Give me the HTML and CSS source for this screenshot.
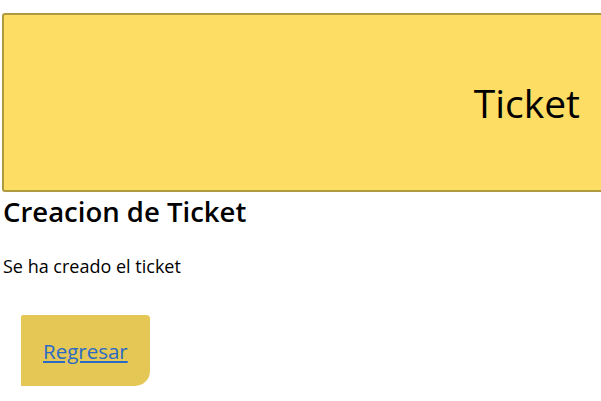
FILE: index.html
```html
<!DOCTYPE html>
<html lang="es">
<head>
<meta charset="utf-8">
<title>Ticket</title>
<link rel="stylesheet" href="styles.css">
</head>
<body>
<header class="banner">
  <h1 class="banner-title">Ticket</h1>
</header>
<main class="content">
  <h2 class="page-title">Creacion de Ticket</h2>
  <p class="message">Se ha creado el ticket</p>
  <div class="back">
    <a class="back-link" href="#">Regresar</a>
  </div>
</main>
</body>
</html>
```

FILE: styles.css
```css
html, body {
  margin: 0;
  padding: 0;
  background: #ffffff;
  font-family: "Open Sans", "Noto Sans", sans-serif;
  color: #000;
  overflow: hidden;
}

.banner {
  margin: 13px 0 0 2px;
  width: 620px;
  height: 179px;
  box-sizing: border-box;
  background: #fddd63;
  border: 2px solid #b09a3f;
  border-radius: 3px;
  display: flex;
  align-items: center;
  justify-content: flex-end;
  padding-right: 40px;
}

.banner-title {
  margin: 0;
  font-size: 39px;
  font-weight: 400;
  line-height: 1;
}

.content {
  padding: 0 0 0 3px;
}

.page-title {
  margin: 4px 0 0 0;
  font-size: 27.5px;
  font-weight: 600;
  line-height: 32px;
}

.message {
  margin: 26px 0 0 0;
  font-size: 18px;
  line-height: 24px;
}

.back {
  margin: 37px 0 0 18px;
  width: 129px;
  height: 71px;
  background: #e4c755;
  border-radius: 2px 4px 15px 0;
  display: flex;
  align-items: center;
  padding-left: 22px;
  box-sizing: border-box;
}

.back-link {
  font-size: 20.5px;
  color: #2a6ac6;
  text-decoration: underline;
}
```
